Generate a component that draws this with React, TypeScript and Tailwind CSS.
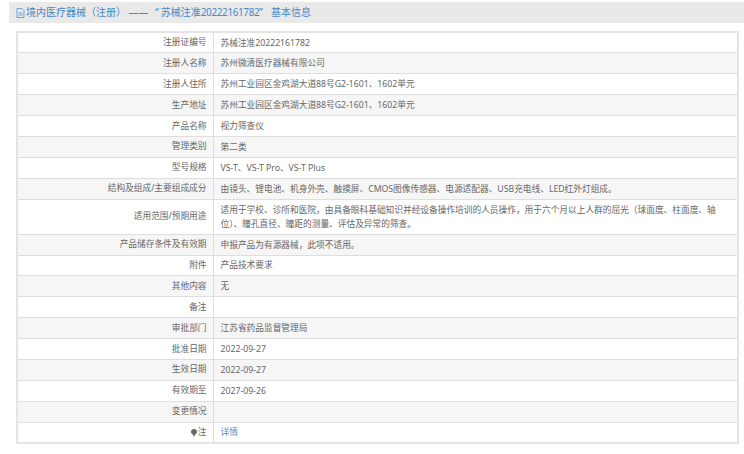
const rows: { label: string; value: string; h?: string; link?: boolean; pin?: boolean }[] = [
  { label: '注册证编号', value: '苏械注准20222161782' },
  { label: '注册人名称', value: '苏州微清医疗器械有限公司' },
  { label: '注册人住所', value: '苏州工业园区金鸡湖大道88号G2-1601、1602单元' },
  { label: '生产地址', value: '苏州工业园区金鸡湖大道88号G2-1601、1602单元' },
  { label: '产品名称', value: '视力筛查仪' },
  { label: '管理类别', value: '第二类' },
  { label: '型号规格', value: 'VS-T、VS-T Pro、VS-T Plus' },
  { label: '结构及组成/主要组成成分', value: '由镜头、锂电池、机身外壳、触摸屏、CMOS图像传感器、电源适配器、USB充电线、LED红外灯组成。' },
  {
    label: '适用范围/预期用途',
    value: '适用于学校、诊所和医院，由具备眼科基础知识并经设备操作培训的人员操作，用于六个月以上人群的屈光（球面度、柱面度、轴位）、瞳孔直径、瞳距的测量、评估及异常的筛查。',
    h: 'h-[35px]',
  },
  { label: '产品储存条件及有效期', value: '申报产品为有源器械，此项不适用。' },
  { label: '附件', value: '产品技术要求' },
  { label: '其他内容', value: '无' },
  { label: '备注', value: '' },
  { label: '审批部门', value: '江苏省药品监督管理局' },
  { label: '批准日期', value: '2022-09-27' },
  { label: '生效日期', value: '2022-09-27' },
  { label: '有效期至', value: '2027-09-26' },
  { label: '变更情况', value: '' },
  { label: '注', value: '详情', link: true, pin: true },
];

function DocIcon() {
  return (
    <svg className="w-[9px] h-[10px] mr-px shrink-0" viewBox="0 0 9 10" fill="none" stroke="#5b9bd5" strokeWidth="0.9">
      <path d="M1 .5h5l2 2v7H1z" />
      <path d="M2.5 5h4M2.5 7h4" />
    </svg>
  );
}

function PinIcon() {
  return (
    <svg className="w-[6px] h-[8px] mr-px inline-block" viewBox="0 0 6 8" fill="#666">
      <path d="M3 0a3 3 0 0 1 3 3c0 1.4-1.2 2-1.900 2.600L3 8 1.900 5.600C1.200 5 0 4.400 0 3a3 3 0 0 1 3-3z" />
    </svg>
  );
}

export default function App() {
  return (
    <div className="w-[744px] h-[454px] bg-white overflow-hidden pt-[2px] pl-[9px] font-['Noto_Sans','Noto_Sans_CJK_SC',sans-serif] text-[8.7px] text-[#666]">
      <div className="h-[21px] bg-[#e9e9e9] flex items-center pl-[7px] text-[10px] text-[#4a87c5] whitespace-pre">
        <DocIcon />
        <span>境内医疗器械（注册） —— </span>
        <span className="ml-[4px]">“</span>
        <span className="ml-[2px]">苏械注准</span>
        <span className="tracking-[-0.4px]">20222161782</span>
        <span>”</span>
        <span className="ml-[8px]">基本信息</span>
      </div>
      <table className="ml-[7px] mt-[8px] w-[723px] table-fixed border-collapse border-2 border-[#e4e4e4]">
        <colgroup>
          <col className="w-[196px]" />
          <col />
        </colgroup>
        <tbody>
          {rows.map((row, i) => (
            <tr key={i} className={`${row.h ?? 'h-[20.9px]'} ${i % 2 === 1 ? 'bg-[#f6f6f6]' : 'bg-white'} border-b border-[#dedede]`}>
              <td className="text-right pr-[6px] border-r border-[#dedede] p-0 leading-[13px]">
                {row.pin && <PinIcon />}
                {row.label}
              </td>
              <td className="pl-[7px] pr-[14px] p-0 leading-[14px]">
                {row.link ? <a className="text-[#4a90d9]">{row.value}</a> : row.value}
              </td>
            </tr>
          ))}
        </tbody>
      </table>
    </div>
  );
}
